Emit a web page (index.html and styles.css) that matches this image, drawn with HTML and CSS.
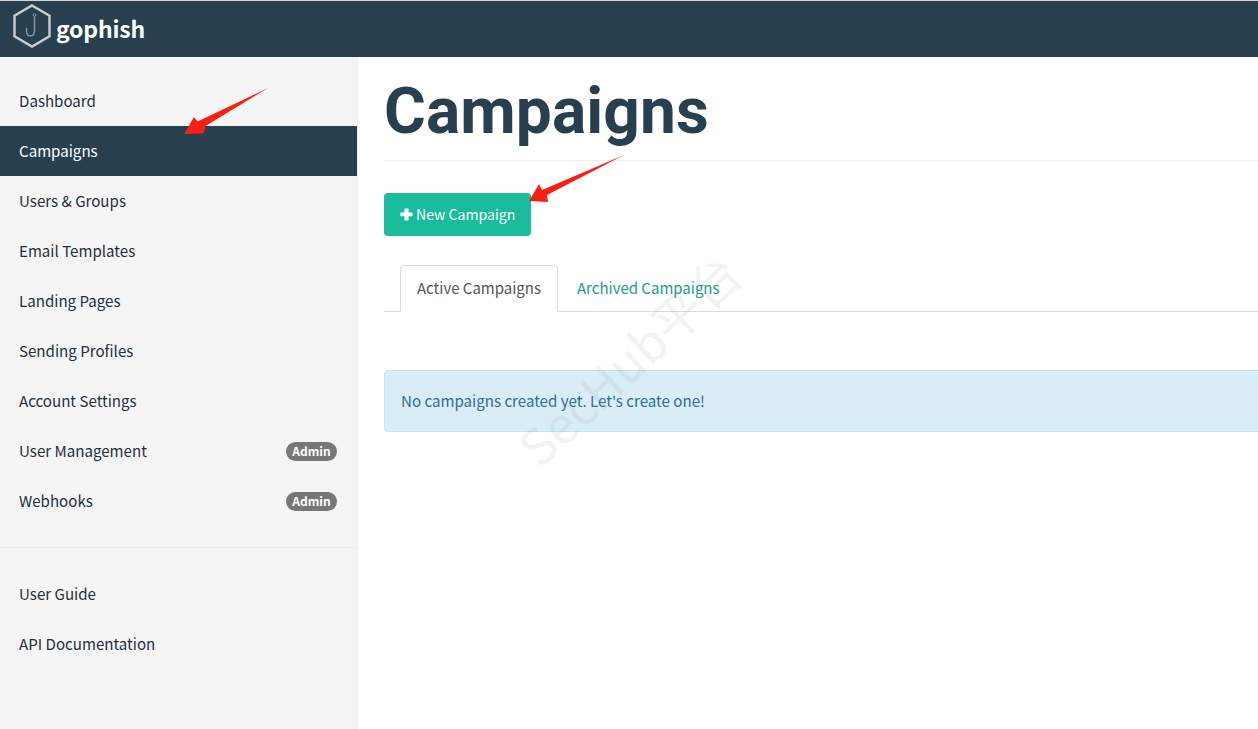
FILE: index.html
```html
<!DOCTYPE html>
<html lang="en">
<head>
<meta charset="utf-8">
<title>Gophish - Campaigns</title>
<link rel="stylesheet" href="styles.css">
</head>
<body>
<header class="topbar">
  <svg class="logo" width="38" height="44" viewBox="0 0 38 44" fill="none">
    <path d="M19 1.5 L36.5 11.7 V32.3 L19 42.5 L1.5 32.3 V11.7 Z" stroke="#c9cdcf" stroke-width="2.4"/>
    <circle cx="21.5" cy="11" r="1.4" stroke="#8a9aa5" stroke-width="1"/>
    <path d="M21.5 12.5 V27 C21.5 33.5 13.5 33.5 13.5 27 V24" stroke="#8a9aa5" stroke-width="1.4"/>
  </svg>
  <span class="brand">gophish</span>
</header>
<div class="layout">
  <nav class="sidebar">
    <ul class="nav">
      <li class="nav-item">Dashboard</li>
      <li class="nav-item active">Campaigns</li>
      <li class="nav-item">Users &amp; Groups</li>
      <li class="nav-item">Email Templates</li>
      <li class="nav-item">Landing Pages</li>
      <li class="nav-item">Sending Profiles</li>
      <li class="nav-item">Account Settings</li>
      <li class="nav-item">User Management <span class="badge">Admin</span></li>
      <li class="nav-item">Webhooks <span class="badge">Admin</span></li>
    </ul>
    <ul class="nav nav-secondary">
      <li class="nav-item">User Guide</li>
      <li class="nav-item">API Documentation</li>
    </ul>
  </nav>
  <main class="content">
    <h1 class="title">Campaigns</h1>
    <button class="btn"><svg class="plus" width="13" height="13" viewBox="0 0 13 13"><path d="M5 0.5 H8 a0.6 0.6 0 0 1 0.6 0.6 V4.6 H12 a0.6 0.6 0 0 1 0.6 0.6 V7.6 a0.6 0.6 0 0 1 -0.6 0.6 H8.6 V11.8 a0.6 0.6 0 0 1 -0.6 0.6 H5 a0.6 0.6 0 0 1 -0.6 -0.6 V8.2 H1 a0.6 0.6 0 0 1 -0.6 -0.6 V5.2 a0.6 0.6 0 0 1 0.6 -0.6 H4.4 V1.1 a0.6 0.6 0 0 1 0.6 -0.6 Z" fill="#fff"/></svg>New Campaign</button>
    <div class="tabs">
      <span class="tab tab-active">Active Campaigns</span>
      <span class="tab tab-link">Archived Campaigns</span>
    </div>
    <div class="alert">No campaigns created yet. Let's create one!</div>
  </main>
</div>
<div class="watermark">SecHub平台</div>
<svg class="arrow arrow-nav" width="90" height="52" viewBox="0 0 90 52"><path d="M84 1 L21.5 39 L19.5 46.5 L0 47 L10 30 L13.5 34.5 Z" fill="#fa1e14"/></svg>
<svg class="arrow arrow-btn" width="100" height="52" viewBox="0 0 100 52"><path d="M95 0 L18 40 L19 47 L0 46 L10 29 L13 35 Z" fill="#fa1e14"/></svg>
</body>
</html>
```
FILE: styles.css
```css
* { box-sizing: border-box; }
html, body { margin: 0; height: 729px; overflow: hidden; }
body {
  position: relative;
  background: #fff;
  font-family: "Noto Sans CJK SC", "Source Sans Pro", "Noto Sans", sans-serif;
  font-size: 15px;
  color: #283f50;
}
.topbar {
  height: 57px;
  background: #283f50;
  border-top: 1px solid #d4d4d4;
  display: flex;
  align-items: center;
  padding-left: 13px;
  gap: 5px;
}
.logo { flex: none; align-self: flex-start; margin-top: 3px; }
.brand {
  color: #fff;
  font-weight: 700;
  font-size: 23px;
  line-height: 1;
  letter-spacing: -0.2px;
  padding-bottom: 2px;
}
.layout { display: flex; height: 672px; }
.sidebar {
  width: 358px;
  flex: none;
  background: #f5f5f5;
  border-right: 1px solid #eee;
  padding-top: 19px;
}
.nav { list-style: none; margin: 0; padding: 0; }
.nav-secondary {
  border-top: 1px solid #eee;
  margin-top: 21px;
  padding-top: 21px;
}
.nav-item {
  height: 50px;
  padding: 0 20px 1px 19px;
  display: flex;
  align-items: center;
  justify-content: space-between;
  color: #1f303d;
  font-size: 15.1px;
  line-height: 1;
}
.nav-item.active { background: #283f50; color: #fff; }
.badge {
  width: 51px;
  height: 19px;
  margin-top: 1px;
  border-radius: 10px;
  background: #777;
  color: #fff;
  font-size: 12px;
  font-weight: 700;
  display: flex;
  align-items: center;
  justify-content: center;
  line-height: 1;
}
.content {
  flex: 1;
  min-width: 0;
  overflow: hidden;
  padding: 0 0 0 26px;
}
.title {
  margin: 0;
  height: 104px;
  border-bottom: 1px solid #eee;
  font-family: Roboto, sans-serif;
  font-size: 64px;
  font-weight: 700;
  line-height: 110px;
  letter-spacing: 0.1px;
  color: #283f50;
  margin-right: -10px;
}
.btn {
  display: flex;
  align-items: center;
  margin-top: 32px;
  width: 147px;
  height: 43px;
  padding: 0 0 1px 16px;
  border: 0;
  border-radius: 4px;
  background: #1abc9c;
  color: #fff;
  font: inherit;
  font-size: 14.1px;
}
.plus { margin: 1px 3px 0 0; }
.tabs {
  display: flex;
  margin-top: 29px;
  padding-left: 16px;
  height: 47px;
  border-bottom: 1px solid #ddd;
  margin-right: -10px;
}
.tab {
  display: flex;
  align-items: center;
  height: 47px;
  padding: 0 16px 2px;
  line-height: 1;
}
.tab-active {
  background: #fff;
  border: 1px solid #ddd;
  border-bottom-color: #fff;
  border-radius: 4px 4px 0 0;
  color: #555;
}
.tab-link { color: #16a085; padding-left: 19px; }
.alert {
  margin-top: 58px;
  margin-right: -10px;
  height: 62px;
  padding: 0 16px 1px;
  display: flex;
  align-items: center;
  background: #d9edf7;
  border: 1px solid #bce8f1;
  border-radius: 4px;
  color: #2f6f96;
  font-size: 15.1px;
  line-height: 1;
}
.watermark {
  position: absolute;
  left: 478px;
  top: 333px;
  width: 300px;
  text-align: center;
  transform: rotate(-43deg);
  font-size: 50px;
  line-height: 1;
  font-weight: 400;
  color: rgba(90, 90, 90, 0.08);
  white-space: nowrap;
  pointer-events: none;
}
.arrow { position: absolute; }
.arrow-nav { left: 184px; top: 87px; }
.arrow-btn { left: 529px; top: 155px; }
```
